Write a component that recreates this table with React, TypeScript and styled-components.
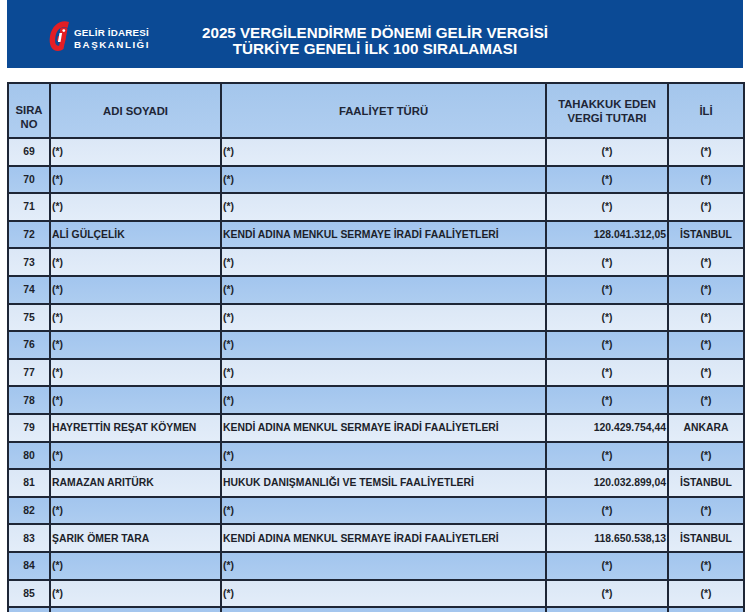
import React from "react";
import styled, { createGlobalStyle } from "styled-components";

const GlobalStyle = createGlobalStyle`
  html, body {
    margin: 0;
    padding: 0;
    background: #ffffff;
    font-family: "Liberation Sans", Arial, sans-serif;
  }
  #root {
    height: 612px;
    overflow: hidden;
  }
`;

const Page = styled.div`
  padding: 0 7px;
`;

const Banner = styled.header`
  height: 68px;
  background: #0b4a95;
  display: grid;
  grid-template-columns: 190px 1fr 190px;
  align-items: center;
`;

const Brand = styled.div`
  display: flex;
  align-items: center;
  gap: 1px;
  padding-left: 40px;
  margin-top: 3px;
`;

const BrandText = styled.div`
  display: flex;
  flex-direction: column;
  color: #ffffff;
  font-weight: bold;
  font-size: 9.8px;
  line-height: 12px;
  margin-top: 6px;
`;

const BrandLine = styled.span<{ $spacing: number }>`
  letter-spacing: ${(p) => p.$spacing}px;
  white-space: nowrap;
`;

const Title = styled.h1`
  margin: 14px 0 0;
  text-align: center;
  color: #ffffff;
  font-size: 15.2px;
  line-height: 16px;
  font-weight: bold;
  white-space: nowrap;
`;

const Table = styled.table`
  margin-top: 14px;
  width: 736px;
  border-collapse: collapse;
  table-layout: fixed;
  color: #1c1f2a;
`;

const HeadCell = styled.th<{ $offset?: number }>`
  background: linear-gradient(#a4c6ec, #b0cef0);
  border: 2px solid #1e2636;
  height: ${(p) => 53 - (p.$offset || 0)}px;
  font-size: 11.3px;
  line-height: 14px;
  font-weight: bold;
  text-align: center;
  padding: ${(p) => p.$offset || 0}px 2px 0;
  color: #202535;
`;

const Row = styled.tr<{ $dark: boolean }>`
  height: 27.6px;
  background: ${(p) =>
    p.$dark ? "linear-gradient(#a2c5ee, #aecdf0)" : "linear-gradient(#dbe7f6, #e3edf9)"};
`;

const Cell = styled.td<{ $align?: "left" | "center" | "right" }>`
  border: 2px solid #1e2636;
  padding: 0 1px;
  font-size: 10.4px;
  font-weight: bold;
  text-align: ${(p) => p.$align || "left"};
  white-space: nowrap;
  overflow: hidden;
`;

const Logo = () => (
  <svg width="26" height="34" viewBox="0 0 26 32">
    <path
      d="M22 2 C14 -1 5 5 3 16 C1.5 25 5 31 11 31 C13 31 15 30 16.5 29 L19 16 L11 16 L10 21 L13 21 L12.2 25.5 C9 26.5 7.5 23 8.3 17.5 C9.3 10 14 5.5 20.5 8 Z"
      fill="#e31e24"
    />
    <path d="M13 9 C16 7 20 8 20.5 9 L18 22 C17 25 14 26 13 25 Z" fill="#e31e24" />
    <rect x="14.8" y="13" width="2.6" height="9" fill="#ffffff" transform="skewX(-10)" />
    <circle cx="16.8" cy="10.6" r="1.4" fill="#ffffff" />
  </svg>
);

type RowData = {
  no: number;
  name?: string;
  activity?: string;
  amount?: string;
  city?: string;
};

const KENDI = "KENDİ ADINA MENKUL SERMAYE İRADİ FAALİYETLERİ";

const named: Record<number, RowData> = {
  72: { no: 72, name: "ALİ GÜLÇELİK", activity: KENDI, amount: "128.041.312,05", city: "İSTANBUL" },
  79: { no: 79, name: "HAYRETTİN REŞAT KÖYMEN", activity: KENDI, amount: "120.429.754,44", city: "ANKARA" },
  81: {
    no: 81,
    name: "RAMAZAN ARITÜRK",
    activity: "HUKUK DANIŞMANLIĞI VE TEMSİL FAALİYETLERİ",
    amount: "120.032.899,04",
    city: "İSTANBUL",
  },
  83: { no: 83, name: "ŞARIK ÖMER TARA", activity: KENDI, amount: "118.650.538,13", city: "İSTANBUL" },
};

const rows: RowData[] = Array.from({ length: 17 }, (_, i) => named[69 + i] || { no: 69 + i });

export default function App() {
  return (
    <>
      <GlobalStyle />
      <Page>
        <Banner>
          <Brand>
            <Logo />
            <BrandText>
              <BrandLine $spacing={0.2}>GELİR İDARESİ</BrandLine>
              <BrandLine $spacing={1.5}>BAŞKANLIĞI</BrandLine>
            </BrandText>
          </Brand>
          <Title>
            2025 VERGİLENDİRME DÖNEMİ GELİR VERGİSİ
            <br />
            TÜRKİYE GENELİ İLK 100 SIRALAMASI
          </Title>
          <div />
        </Banner>
        <Table>
          <colgroup>
            <col style={{ width: 42 }} />
            <col style={{ width: 171 }} />
            <col style={{ width: 325 }} />
            <col style={{ width: 122 }} />
            <col style={{ width: 76 }} />
          </colgroup>
          <thead>
            <tr>
              <HeadCell $offset={12}>
                SIRA
                <br />
                NO
              </HeadCell>
              <HeadCell>ADI SOYADI</HeadCell>
              <HeadCell>FAALİYET TÜRÜ</HeadCell>
              <HeadCell>
                TAHAKKUK EDEN
                <br />
                VERGİ TUTARI
              </HeadCell>
              <HeadCell>İLİ</HeadCell>
            </tr>
          </thead>
          <tbody>
            {rows.map((r) => (
              <Row key={r.no} $dark={r.no % 2 === 0}>
                <Cell $align="center">{r.no}</Cell>
                <Cell>{r.name ? r.name : "(*)"}</Cell>
                <Cell>{r.activity ? r.activity : "(*)"}</Cell>
                <Cell $align={r.amount ? "right" : "center"}>{r.amount ? r.amount : "(*)"}</Cell>
                <Cell $align="center">{r.city ? r.city : "(*)"}</Cell>
              </Row>
            ))}
            <Row $dark>
              <Cell />
              <Cell />
              <Cell />
              <Cell />
              <Cell />
            </Row>
          </tbody>
        </Table>
      </Page>
    </>
  );
}
